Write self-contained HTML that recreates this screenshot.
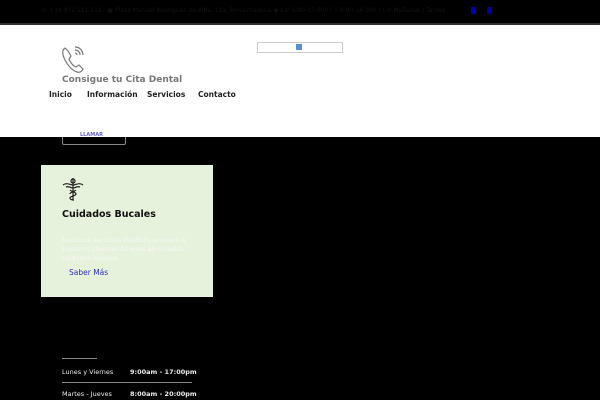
<!DOCTYPE html><html><head><style>
body{margin:0;width:600px;height:400px;background:#000;font-family:"DejaVu Sans","Liberation Sans",sans-serif;position:relative;overflow:hidden}
.a{position:absolute}
.n{position:absolute;top:90px;font-size:7.5px;font-weight:bold;color:#222}
</style></head><body>
<div class="a" style="left:0;top:0;width:600px;height:23px;background:#000;border-bottom:2px solid #333"></div>
<div class="a" style="left:42px;top:7px;font-size:6px;color:#141414;white-space:nowrap">✆ +34 971 111 111 &nbsp; ▣ Plaza Manuel Rodríguez de Alba, 11a, Benalmádena ◉ L-V 9:00-17:00h | S 9:00-14:00h | L-V Mañanas | Tardes</div>
<div class="a" style="left:471px;top:7px;width:5px;height:7px;background:#0000b0"></div>
<div class="a" style="left:487px;top:7px;width:5px;height:7px;background:#000090"></div>
<div class="a" style="left:0;top:25px;width:600px;height:112px;background:#fff"></div>
<svg class="a" style="left:60px;top:42px" width="28" height="34" viewBox="0 0 28 34" fill="none" stroke="#777" stroke-width="1.2"><path d="M5 6c-3 2-3 6 0 12s8 11 12 12c3 1 5-1 6-3l-4-4-3 2c-3-1-6-5-7-8l2-3-3-5z"/><path d="M15 8a5 5 0 0 1 5 5M15 5a8 8 0 0 1 8 8M15 11a2 2 0 0 1 2 2"/></svg>
<div class="a" style="left:62px;top:75px;font-size:9px;font-weight:bold;color:#777">Consigue tu Cita Dental</div>
<div class="n" style="left:49px">Inicio</div>
<div class="n" style="left:87px">Información</div>
<div class="n" style="left:147px">Servicios</div>
<div class="n" style="left:198px">Contacto</div>
<div class="a" style="left:257px;top:42px;width:84px;height:9px;border:1px solid #ccc;background:#fff"></div>
<div class="a" style="left:296px;top:44px;width:6px;height:6px;background:#5a8fd0"></div>
<div class="a" style="left:62px;top:137px;width:62px;height:7px;border:1px solid #888;border-top:none;border-radius:0 0 2px 2px"></div>
<div class="a" style="left:80px;top:132px;font-size:5px;color:#6666cc;font-weight:bold">LLAMAR</div>
<div class="a" style="left:41px;top:165px;width:172px;height:132px;background:#e6f2dc"></div>
<svg class="a" style="left:62px;top:177px" width="22" height="24" viewBox="0 0 22 24" fill="none" stroke="#222" stroke-width="1.2"><path d="M11 1v22M1 8c4-3 7 0 10 0s6-3 10 0M4 10c3-1 5 1 7 1s4-2 7-1M8 13c2 2 6 2 6 4s-6 2-6 4 4 2 4 2M14 13c-2 2-6 2-6 4"/><circle cx="11" cy="4" r="2"/></svg>
<div class="a" style="left:62px;top:209px;font-size:9.5px;font-weight:bold;color:#111">Cuidados Bucales</div>
<div class="a" style="left:62px;top:236px;width:130px;font-size:6.5px;line-height:9px;color:#f6faf2">Nuestros servicios médicos proveen a nuestros clientes de unos apropiados cuidados bucales.</div>
<div class="a" style="left:69px;top:268px;font-size:7.5px;color:#3030b0">Saber Más</div>
<div class="a" style="left:62px;top:358px;width:35px;height:1px;background:#888"></div>
<div class="a" style="left:62px;top:368px;font-size:6.5px;color:#eee">Lunes y Viernes</div>
<div class="a" style="left:130px;top:368px;font-size:6.5px;font-weight:bold;color:#eee">9:00am - 17:00pm</div>
<div class="a" style="left:62px;top:382px;width:130px;height:1px;background:#888"></div>
<div class="a" style="left:62px;top:390px;font-size:6.5px;color:#eee">Martes - Jueves</div>
<div class="a" style="left:130px;top:390px;font-size:6.5px;font-weight:bold;color:#eee">8:00am - 20:00pm</div>
</body></html>
